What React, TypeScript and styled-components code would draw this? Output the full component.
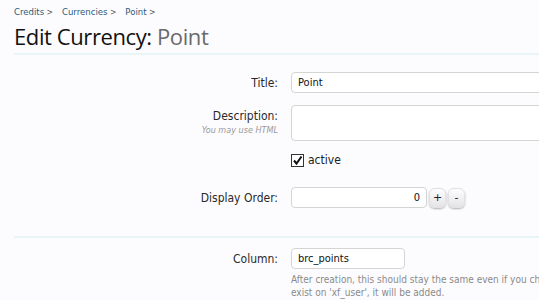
import styled, { createGlobalStyle } from "styled-components";

const Global = createGlobalStyle`
  html, body {
    margin: 0;
    padding: 0;
    background: #fcfcfe;
    overflow: hidden;
  }
  body {
    font-family: "DejaVu Sans Condensed", "DejaVu Sans", sans-serif;
    font-size: 11px;
    color: #333;
  }
`;

export default function App() {
  return (
    <Page>
      <Global />
      <Breadcrumb>
        <Crumb>Credits</Crumb>
        <Crumb>Currencies</Crumb>
        <Crumb>Point</Crumb>
      </Breadcrumb>
      <Heading>
        Edit Currency: <Muted>Point</Muted>
      </Heading>
      <Divider />

      <Form>
        <Label>Title:</Label>
        <Control>
          <TextInput defaultValue="Point" $width={260} />
        </Control>

        <Label>
          Description:
          <Hint>You may use HTML</Hint>
        </Label>
        <Control>
          <TextArea />
        </Control>

        <span />
        <Control>
          <Check>
            <CheckBox>
              <svg width="11" height="11" viewBox="0 0 11 11">
                <path d="M2 5.5 L4.5 8.5 L9.5 1.5" fill="none" stroke="#111" strokeWidth="2" />
              </svg>
            </CheckBox>
            active
          </Check>
        </Control>

        <Label>Display Order:</Label>
        <Control>
          <Spinner>
            <TextInput defaultValue="0" $width={136} $right />
            <SpinButton>+</SpinButton>
            <SpinButton>-</SpinButton>
          </Spinner>
        </Control>
      </Form>

      <Divider $gap />

      <Form>
        <Label>Column:</Label>
        <Control>
          <TextInput defaultValue="brc_points" $width={114} />
          <Explain>
            After creation, this should stay the same even if you change the currency. If the column does not
            <br />
            exist on 'xf_user', it will be added.
          </Explain>
        </Control>
      </Form>
    </Page>
  );
}

const Page = styled.div`
  padding: 5px 0 0 14px;
  width: 700px;
`;

const Breadcrumb = styled.div`
  display: flex;
  gap: 9px;
  height: 13px;
  align-items: center;
`;

const Crumb = styled.span`
  font-size: 9.5px;
  color: #2b5a7a;

  &::after {
    content: " >";
    color: #555;
    font-size: 8.5px;
  }
`;

const Heading = styled.h1`
  margin: 3px 0 0;
  font-family: "Open Sans", sans-serif;
  font-weight: normal;
  font-size: 22px;
  line-height: 30px;
  letter-spacing: -0.4px;
  color: #111;
`;

const Muted = styled.span`
  color: #6a6a6a;
`;

const Divider = styled.div<{ $gap?: boolean }>`
  height: 2px;
  background: #e8f4f6;
  margin: ${(p) => (p.$gap ? "28px 0 10px" : "2px 0 17px")};
`;

const Form = styled.div`
  display: grid;
  grid-template-columns: 264px 1fr;
  column-gap: 13px;
  row-gap: 12px;
`;

const Label = styled.div`
  text-align: right;
  font-size: 12px;
  color: #2a2a2a;
  padding-top: 4px;
`;

const Hint = styled.div`
  font-size: 9px;
  font-style: italic;
  color: #999;
  margin-top: 2px;
`;

const Control = styled.div`
  display: flex;
  flex-direction: column;
  align-items: flex-start;
`;

const TextInput = styled.input<{ $width: number; $right?: boolean }>`
  box-sizing: border-box;
  width: ${(p) => p.$width}px;
  height: 21px;
  padding: 0 6px;
  border: 1px solid #d4d4d4;
  border-radius: 4px;
  background: #fff;
  font-family: "DejaVu Sans Condensed", "DejaVu Sans", sans-serif;
  font-size: 11px;
  color: #111;
  text-align: ${(p) => (p.$right ? "right" : "left")};
  outline: none;
`;

const TextArea = styled.textarea`
  box-sizing: border-box;
  width: 260px;
  height: 36px;
  border: 1px solid #d4d4d4;
  border-radius: 4px;
  background: #fff;
  resize: none;
  outline: none;
`;

const Check = styled.label`
  display: flex;
  align-items: center;
  gap: 4px;
  font-size: 12px;
  color: #222;
  height: 14px;
  margin-bottom: 8px;
`;

const CheckBox = styled.span`
  box-sizing: border-box;
  width: 13px;
  height: 13px;
  border: 1px solid #333;
  background: #fff;
  display: flex;
  align-items: center;
  justify-content: center;
`;

const Spinner = styled.div`
  display: flex;
  align-items: center;
  gap: 2px;
`;

const SpinButton = styled.button`
  width: 17px;
  height: 20px;
  padding: 0;
  border: 1px solid #e2e2e2;
  border-radius: 6px;
  background: linear-gradient(#fdfdfd, #e4e4e8);
  box-shadow: 0 1px 2px rgba(0, 0, 0, 0.3);
  font-family: "DejaVu Sans", sans-serif;
  font-size: 11px;
  color: #222;
`;

const Explain = styled.div`
  margin-top: 4px;
  font-size: 10px;
  line-height: 13px;
  color: #8a8a8a;
  white-space: nowrap;
`;
